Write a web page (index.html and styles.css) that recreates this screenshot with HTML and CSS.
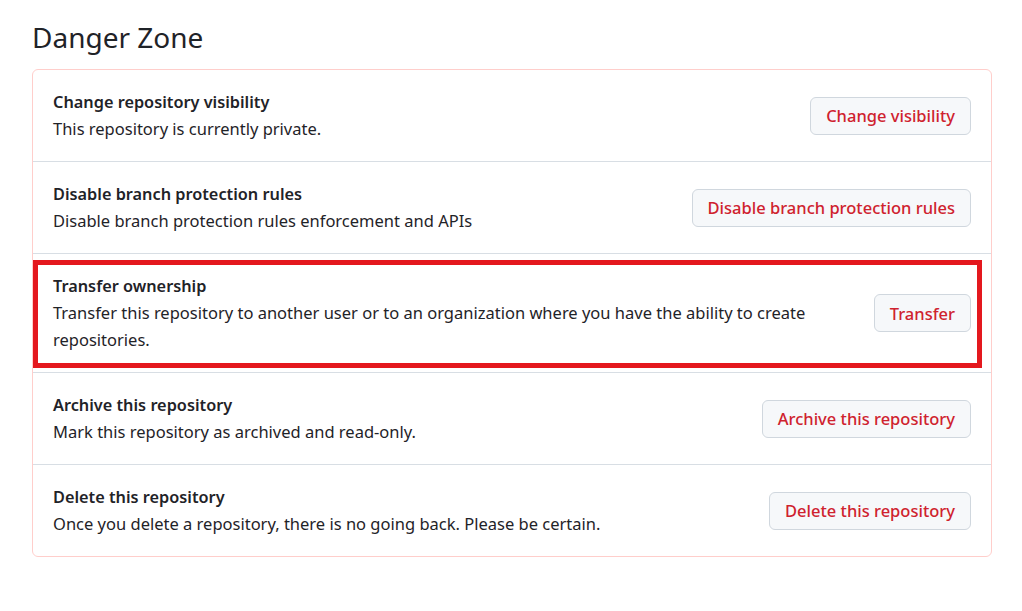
FILE: index.html
```html
<!DOCTYPE html>
<html lang="en">
<head>
<meta charset="utf-8">
<title>Danger Zone</title>
<link rel="stylesheet" href="styles.css">
</head>
<body>
<main class="page">
  <h2 class="title">Danger Zone</h2>
  <div class="box">
    <div class="row">
      <div class="info">
        <div class="name">Change repository visibility</div>
        <div class="desc">This repository is currently private.</div>
      </div>
      <button class="btn">Change visibility</button>
    </div>
    <div class="row">
      <div class="info">
        <div class="name">Disable branch protection rules</div>
        <div class="desc">Disable branch protection rules enforcement and APIs</div>
      </div>
      <button class="btn">Disable branch protection rules</button>
    </div>
    <div class="row highlighted">
      <div class="info">
        <div class="name">Transfer ownership</div>
        <div class="desc">Transfer this repository to another user or to an organization where you have the ability to create repositories.</div>
      </div>
      <button class="btn">Transfer</button>
      <div class="mark"></div>
    </div>
    <div class="row">
      <div class="info">
        <div class="name">Archive this repository</div>
        <div class="desc">Mark this repository as archived and read-only.</div>
      </div>
      <button class="btn">Archive this repository</button>
    </div>
    <div class="row">
      <div class="info">
        <div class="name">Delete this repository</div>
        <div class="desc">Once you delete a repository, there is no going back. Please be certain.</div>
      </div>
      <button class="btn">Delete this repository</button>
    </div>
  </div>
</main>
</body>
</html>
```

FILE: styles.css
```css
html, body {
  margin: 0;
  padding: 0;
  background: #ffffff;
}

body {
  font-family: "Noto Sans", "Open Sans", "Liberation Sans", sans-serif;
  color: #1f2328;
}

.page {
  padding: 18px 30px 0 32px;
}

.title {
  margin: 0 0 13px 0;
  font-size: 28px;
  font-weight: 400;
  line-height: 38px;
  color: #1f2328;
}

.box {
  border: 1px solid #ffcecb;
  border-radius: 6px;
}

.row {
  position: relative;
  display: flex;
  align-items: center;
  gap: 16px;
  padding: 19px 20px;
  border-top: 1px solid #d8dee4;
}

.row:first-child {
  border-top: none;
}

.info {
  flex: 1;
  min-width: 0;
  padding-top: 1px;
}

.name {
  font-size: 16.3px;
  font-weight: 600;
  line-height: 25px;
}

.desc {
  font-size: 16.5px;
  line-height: 27px;
}

.btn {
  flex: none;
  height: 38px;
  padding: 0 15px;
  font-family: inherit;
  font-size: 16.5px;
  font-weight: 500;
  color: #cf222e;
  background: #f6f8fa;
  border: 1px solid #d0d7de;
  border-radius: 6px;
}

.mark {
  position: absolute;
  top: 6px;
  left: 0;
  right: 9px;
  bottom: 4px;
  border: 5px solid #e4181e;
  pointer-events: none;
}
```
